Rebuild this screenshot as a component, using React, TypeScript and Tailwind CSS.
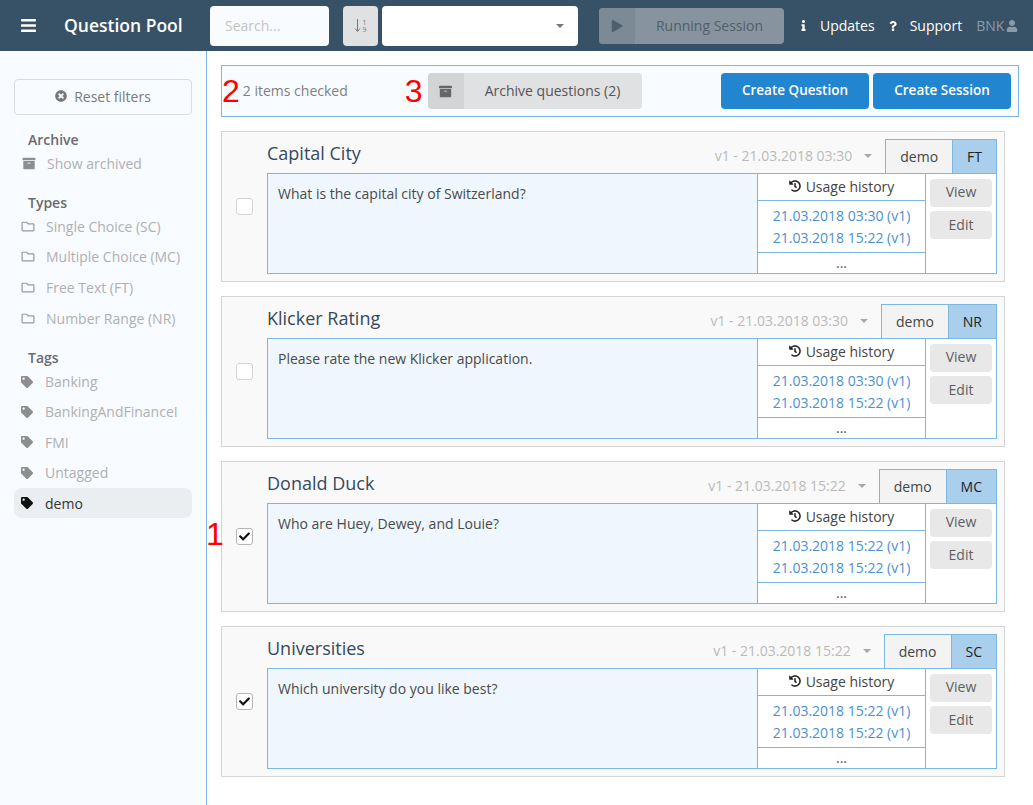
import { FaArchive, FaBars, FaCheck, FaHistory, FaInfo, FaPlay, FaQuestion, FaRegFolder, FaTag, FaTimesCircle, FaUser } from 'react-icons/fa'

const TYPES = ['Single Choice (SC)', 'Multiple Choice (MC)', 'Free Text (FT)', 'Number Range (NR)']
const TAGS = ['Banking', 'BankingAndFinanceI', 'FMI', 'Untagged', 'demo']

const QUESTIONS = [
  { title: 'Capital City', version: 'v1 - 21.03.2018 03:30', type: 'FT', text: 'What is the capital city of Switzerland?', dates: ['21.03.2018 03:30 (v1)', '21.03.2018 15:22 (v1)'], checked: false },
  { title: 'Klicker Rating', version: 'v1 - 21.03.2018 03:30', type: 'NR', text: 'Please rate the new Klicker application.', dates: ['21.03.2018 03:30 (v1)', '21.03.2018 15:22 (v1)'], checked: false },
  { title: 'Donald Duck', version: 'v1 - 21.03.2018 15:22', type: 'MC', text: 'Who are Huey, Dewey, and Louie?', dates: ['21.03.2018 15:22 (v1)', '21.03.2018 15:22 (v1)'], checked: true },
  { title: 'Universities', version: 'v1 - 21.03.2018 15:22', type: 'SC', text: 'Which university do you like best?', dates: ['21.03.2018 15:22 (v1)', '21.03.2018 15:22 (v1)'], checked: true },
]

type Question = (typeof QUESTIONS)[number]

function QuestionCard({ q }: { q: Question }) {
  return (
    <div className="flex h-[151px] w-[784px] border border-[#d4d4d5] bg-[#f9f9f9] pt-[7px] pb-[7px]">
      <div className="flex w-[45px] shrink-0 items-center justify-center">
        {q.checked ? (
          <div className="flex h-[17px] w-[17px] items-center justify-center rounded-[3px] border border-[#b5b5b5] bg-white text-[11px] text-[#111]">
            <FaCheck />
          </div>
        ) : (
          <div className="h-[17px] w-[17px] rounded-[3px] border border-[#d4d4d5] bg-white" />
        )}
      </div>
      <div className="flex w-[730px] flex-col">
        <div className="flex h-[34px] shrink-0 items-center">
          <div className="flex-1 pb-[6px] text-[18px] leading-[28px] font-medium text-[#34495e]">{q.title}</div>
          <div className="flex items-center pr-[13px] pb-px text-[14px] text-[#b9b9b9]">
            {q.version}
            <span className="ml-[12px] h-0 w-0 border-x-[4px] border-t-[4px] border-x-transparent border-t-[#a8a8a8]" />
          </div>
          <div className="flex h-full items-center border-x border-t border-[#7cb8e2] bg-[#f3f3f3] px-[14px] text-[14px] text-[#444]">demo</div>
          <div className="flex h-full items-center border-t border-r border-[#7cb8e2] bg-[#a9cfec] px-[14px] text-[14px] text-[#222]">{q.type}</div>
        </div>
        <div className="flex flex-1 border border-[#7cb8e2] bg-white">
          <div className="w-[490px] shrink-0 border-r border-[#7cb8e2] bg-[#eff6fd] px-[10px] pt-[10px] text-[14px] leading-[20px] text-[#4a4a4a]">{q.text}</div>
          <div className="flex w-[168px] shrink-0 flex-col border-r border-[#7cb8e2] text-[14px]">
            <div className="flex h-[27px] shrink-0 items-center justify-center gap-[5px] border-b border-[#7cb8e2] pb-[2px] text-[#444]">
              <FaHistory className="text-[12px] text-[#222]" />
              Usage history
            </div>
            <div className="flex flex-1 flex-col items-center justify-center border-b border-[#7cb8e2] leading-[22px] text-[#4a90d2]">
              {q.dates.map((d, i) => (
                <div key={i}>{d}</div>
              ))}
            </div>
            <div className="flex h-[20px] shrink-0 items-center justify-center pb-[2px] text-[#555]">...</div>
          </div>
          <div className="flex flex-1 flex-col gap-[4px] px-[4px] pt-[5px]">
            <div className="flex h-[28px] items-center justify-center rounded-[4px] bg-[#e8e8e9] pb-[3px] text-[14px] text-[#5f5f5f]">View</div>
            <div className="flex h-[28px] items-center justify-center rounded-[4px] bg-[#e8e8e9] pb-[2px] text-[14px] text-[#5f5f5f]">Edit</div>
          </div>
        </div>
      </div>
    </div>
  )
}

export default function App() {
  return (
    <div className="flex h-[805px] w-[1033px] flex-col overflow-hidden bg-white font-['Open_Sans',sans-serif] text-[14px]">
      {/* header */}
      <header className="flex h-[51px] shrink-0 items-center bg-[#375166] text-white">
        <FaBars className="ml-[20px] text-[17px]" />
        <div className="ml-[27px] w-[146px] text-[17.5px] font-semibold">Question Pool</div>
        <div className="flex h-[40px] w-[119px] items-center rounded-[4px] bg-[#f8fbff] pl-[15px] text-[14px] text-[#c4c4c4]">Search...</div>
        <div className="ml-[14px] flex h-[40px] w-[35px] items-center justify-center gap-[1px] rounded-[4px] bg-[#e0e1e2] text-[#777]">
          <svg width="7" height="15" viewBox="0 0 7 15" fill="none" stroke="currentColor">
            <path d="M3.5 1v12M1 10.5l2.5 3 2.5-3" />
          </svg>
          <div className="flex flex-col text-[7px] leading-[7px]">
            <span>1</span>
            <span>9</span>
          </div>
        </div>
        <div className="ml-[4px] flex h-[40px] w-[196px] items-center justify-end rounded-[4px] bg-white pr-[14px]">
          <span className="h-0 w-0 border-x-[4px] border-t-[4px] border-x-transparent border-t-[#777]" />
        </div>
        <div className="ml-[21px] flex h-[36px] w-[185px] items-center overflow-hidden rounded-[4px] bg-[#87949f] text-[14px] text-[#4f5f6c]">
          <div className="flex h-full w-[36px] items-center justify-center bg-[#7c8a96] text-[12px]">
            <FaPlay />
          </div>
          <div className="flex-1 text-center">Running Session</div>
        </div>
        <FaInfo className="ml-[14px] text-[11px]" />
        <span className="ml-[11px]">Updates</span>
        <FaQuestion className="ml-[13px] text-[10px]" />
        <span className="ml-[12px]">Support</span>
        <span className="ml-[14px] text-[#8b9aa6]">BNK</span>
        <FaUser className="ml-[2px] text-[12px] text-[#8b9aa6]" />
      </header>

      <div className="flex flex-1">
        {/* sidebar */}
        <aside className="w-[207px] shrink-0 border-r border-[#7cb8e2] bg-[#f8fbff] px-[14px] pt-[28px]">
          <div className="flex h-[36px] items-center justify-center gap-[7px] rounded-[4px] border border-[#d8dde2] pb-[2px] text-[14px] text-[#7a7a7a]">
            <FaTimesCircle className="text-[12px] text-[#777]" />
            Reset filters
          </div>
          <div className="mt-[15px] pl-[14px] leading-[20px] font-semibold text-[#6b6b6b]">Archive</div>
          <div className="flex h-[26px] items-center text-[#b0b0b0]">
            <FaArchive className="ml-[8px] w-[14px] text-[13px] text-[#8e8e8e]" />
            <span className="ml-[11px]">Show archived</span>
          </div>
          <div className="mt-[17px] pl-[14px] leading-[20px] font-semibold text-[#6b6b6b]">Types</div>
          <div className="mt-[-2px]">
            {TYPES.map(t => (
              <div key={t} className="flex h-[30.6px] items-center text-[#b0b0b0]">
                <FaRegFolder className="ml-[7px] w-[14px] text-[13px] text-[#9a9a9a]" />
                <span className="ml-[11px]">{t}</span>
              </div>
            ))}
          </div>
          <div className="mt-[15px] pl-[14px] leading-[20px] font-semibold text-[#6b6b6b]">Tags</div>
          <div className="mt-[-2px]">
            {TAGS.map(t => (
              <div key={t} className={`flex h-[30.4px] items-center rounded-[8px] ${t === 'demo' ? 'bg-[#ebeef1] text-[#333]' : 'text-[#b0b0b0]'}`}>
                <FaTag className={`ml-[7px] w-[12px] text-[12px] ${t === 'demo' ? 'text-[#111]' : 'text-[#8e8e8e]'}`} />
                <span className="ml-[12px]">{t}</span>
              </div>
            ))}
          </div>
        </aside>

        {/* main */}
        <main className="relative flex-1 pt-[14px] pl-[14px]">
          <div className="flex h-[52px] w-[798px] items-center border border-[#7cb8e2] bg-[#f8fbff] pr-[7px]">
            <span className="pb-[1px] font-['Liberation_Sans',sans-serif] text-[32px] leading-none text-[#f00]">2</span>
            <span className="ml-[3px] pb-[2px] text-[#808080]">2 items checked</span>
            <span className="ml-[57px] pb-[1px] font-['Liberation_Sans',sans-serif] text-[32px] leading-none text-[#f00]">3</span>
            <div className="ml-[5px] flex h-[36px] w-[214px] items-center overflow-hidden rounded-[4px] bg-[#e0e1e2] text-[#555]">
              <div className="flex h-full w-[36px] items-center justify-center bg-[#d3d4d5] text-[#666]">
                <FaArchive className="text-[13px]" />
              </div>
              <div className="flex-1 pb-[2px] text-center">Archive questions (2)</div>
            </div>
            <div className="ml-auto flex h-[36px] w-[148px] items-center justify-center rounded-[4px] bg-[#2185d0] pb-[2px] text-[13.5px] font-semibold text-white">Create Question</div>
            <div className="ml-[4px] flex h-[36px] w-[138px] items-center justify-center rounded-[4px] bg-[#2185d0] pb-[2px] text-[13.5px] font-semibold text-white">Create Session</div>
          </div>
          <div className="mt-[14px] flex flex-col gap-[14px]">
            {QUESTIONS.map(q => (
              <QuestionCard key={q.title} q={q} />
            ))}
          </div>
          <span className="absolute top-[467px] left-[-1px] font-['Liberation_Sans',sans-serif] text-[32px] leading-none text-[#f00]">1</span>
        </main>
      </div>
    </div>
  )
}
